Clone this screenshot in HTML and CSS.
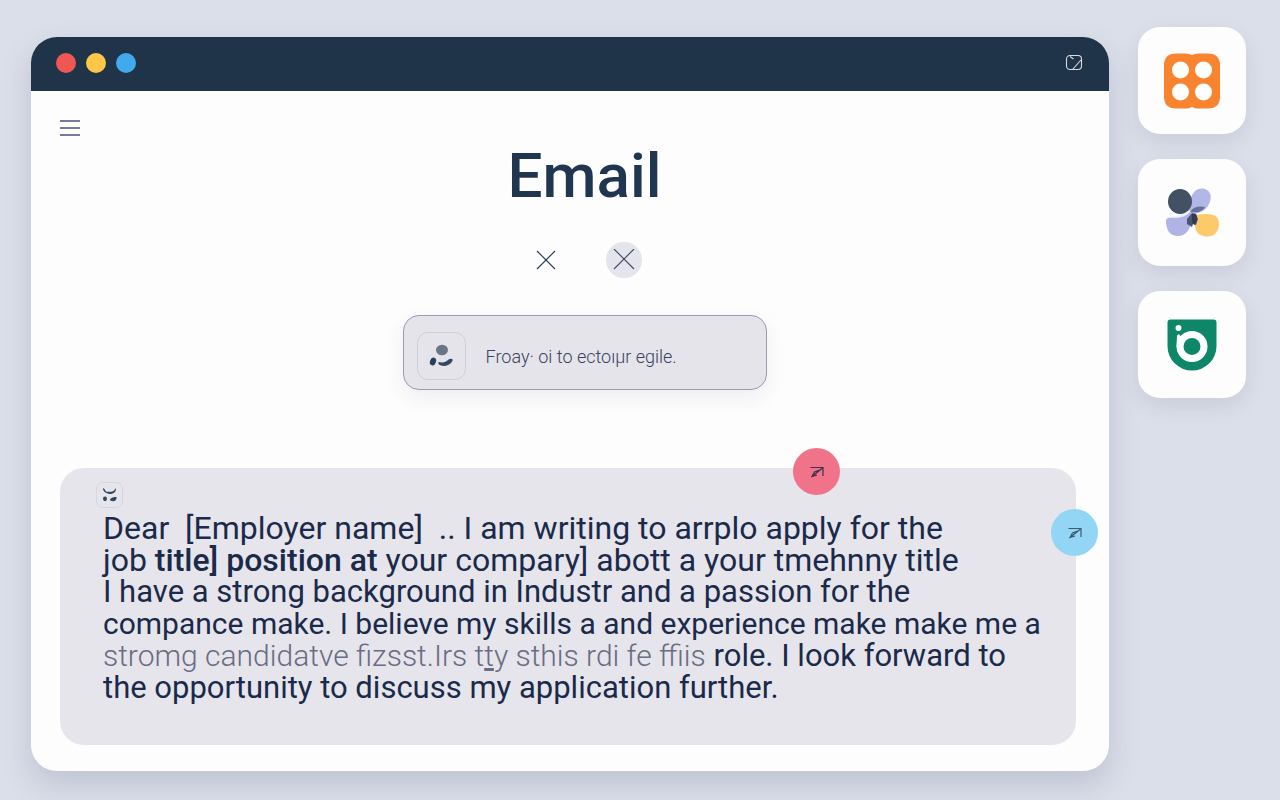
FILE: index.html
```html
<!DOCTYPE html>
<html lang="en">
<head>
    <meta charset="UTF-8">
    <meta name="viewport" content="width=device-width, initial-scale=1.0">
    <title>Email</title>
    <link rel="stylesheet" href="styles.css">
</head>
<body>

<div class="desktop">
    <div class="window">
        <header class="titlebar">
            <button class="dot red" aria-label="Close"></button>
            <button class="dot yellow" aria-label="Minimize"></button>
            <button class="dot blue" aria-label="Maximize"></button>
            <button class="icon-btn expand" aria-label="Open in new window">
                <svg width="18" height="18" viewBox="0 0 18 18" fill="none" stroke="#dcdbe3" stroke-width="1.1">
                    <rect x="1.5" y="1.5" width="15" height="14" rx="3.5"/>
                    <path d="M7.5 15.5L16 6M5 2.500l3.500 2.500"/>
                </svg>
            </button>
        </header>

        <main class="content">
            <div class="top">
                <button class="icon-btn menu" aria-label="Menu">
                    <svg width="20" height="18" viewBox="0 0 20 18" stroke="#46527a" stroke-width="1.6">
                        <path d="M0 2h20M0 9h20M0 16h20"/>
                    </svg>
                </button>
                <div class="intro">
                    <h1>Email</h1>
                    <div class="actions">
                        <button class="round" aria-label="Dismiss">
                            <svg width="20" height="20" viewBox="0 0 20 20" stroke="#2c3e5a" stroke-width="1.2"><path d="M1 1l18 18M19 1L1 19"/></svg>
                        </button>
                        <button class="round filled" aria-label="Clear">
                            <svg width="22" height="22" viewBox="0 0 22 22" stroke="#4a4f68" stroke-width="1.2"><path d="M1 0l20 20M21 0L1 20"/></svg>
                        </button>
                    </div>
                    <label class="field">
                        <span class="avatar">
                            <svg width="26" height="26" viewBox="0 0 26 26">
                                <ellipse cx="14" cy="7" rx="6" ry="5.2" fill="#6b7588"/>
                                <ellipse cx="5" cy="18.5" rx="3" ry="4" fill="#26405e" transform="rotate(20 5 18.5)"/>
                                <path d="M11 19c4 1 7 0 9.500-2.500 2.500-1.500 5-.5 4 1.500-3 5.500-10.500 6-13.500 3.500-1-1-1-2 0-2.500z" fill="#34495f"/>
                            </svg>
                        </span>
                        <input type="text" value="Froay· oi to ectoıµr egile." aria-label="Recipient">
                    </label>
                </div>
            </div>

            <section class="message">
                <span class="badge">
                    <svg width="16" height="14" viewBox="0 0 16 14" fill="#34465c">
                        <path d="M1 0c2 .5 2 3 3.500 3.800h5C12 3.500 12.500 2 13.500.500l.5 0c0 3-1.500 4.500-4 5.300-2 .5-4 .3-5.500-.8C2 4 1 2.500 1 0z"/>
                        <ellipse cx="3" cy="10.8" rx="2" ry="2.4"/>
                        <path d="M8 11.500c1-2 4-2.500 6.500-2.500.5 2.500-1 4.200-3.500 4.200-2 0-3-.5-3-1.700z"/>
                    </svg>
                </span>
                <p>
                    <span class="line large">Dear &nbsp;[Employer name] &nbsp;.. I am writing to arrplo apply for the</span>
                    <span class="line large">job <b>title] position at</b> your compary] abott a your tmehnny title</span>
                    <span class="line">I have a strong background in Industr and a passion for the</span>
                    <span class="line small">compance make. I believe my skills a and experience make make me a</span>
                    <span class="line"><span class="small faded">stromg candidatve fizsst.Irs t<u>t</u>y sthis rdi fe ffiis</span> role. I look forward to</span>
                    <span class="line">the opportunity to discuss my application further.</span>
                </p>
                <button class="fab pink" aria-label="Send">
                    <svg width="14" height="12" viewBox="0 0 14 12" fill="none" stroke="#3b3350" stroke-width="1.2"><path d="M.5 1.500H13V10M12.500 2L2 10.500M7 9L2 10.500 4.500 6l5-2"/></svg>
                </button>
                <button class="fab sky" aria-label="Forward">
                    <svg width="14" height="12" viewBox="0 0 14 12" fill="none" stroke="#3f5a70" stroke-width="1.2"><path d="M.5 1.500H13V10M12.500 2L2 10.500M7 9L2 10.500 4.500 6l5-2"/></svg>
                </button>
            </section>
        </main>
    </div>

    <nav class="apps">
        <a href="#" class="app" aria-label="Grid">
            <svg width="56" height="56" viewBox="0 0 56 56">
                <path d="M12 .5h10q3 0 6 1.500 3-1.500 6-1.500h10q12 0 12 12v31q0 12-12 12H34q-3 0-6-1.500-3 1.500-6 1.500H12q-12 0-12-12v-31Q0 .5 12 .5z" fill="#f98430"/>
                <g fill="#fff">
                    <circle cx="16.5" cy="17" r="8.5"/>
                    <circle cx="39.5" cy="17" r="8.5"/>
                    <circle cx="16.5" cy="39" r="8.5"/>
                    <circle cx="39.5" cy="39" r="8.5"/>
                </g>
            </svg>
        </a>
        <a href="#" class="app" aria-label="Petals">
            <svg width="54" height="50" viewBox="0 0 54 50">
                <path d="M26 10C28 3.500 32 .5 37 .5c6 0 10 5 8.500 11C44 19 39 23.500 33 25c-5 1-8 4-11 7l-5-6c5-4 8-9 9-16z" fill="#b3b7e8"/>
                <path d="M1 33c0-3 3-3.500 6-3.500 7 0 13-1 18-5.500l2 6c-1 11-6 18-14 18S1 42 1 33z" fill="#b0b4e4"/>
                <path d="M5 29c8-1 14-3 18-7l3 1c-5 6-12 8-21 6z" fill="#eff0fb"/>
                <path d="M25 24c3-5 9-6.500 15-5-2 4-6 6-15 5z" fill="#65719a"/>
                <ellipse cx="15" cy="13.5" rx="12" ry="12.5" fill="#435165"/>
                <path d="M31 27c7-1.500 13-1 17 0 4 1 6 4 6 9 0 8-5 12.500-12 12.500-8 0-12-5-12-11.500 0-4 .5-7 1-10z" fill="#fdca6b"/>
                <path d="M22 31l5-6 4 1 2 5-2 6-3-1-1 3-5-3z" fill="#4a5478"/>
                <path d="M27 26l4 0 1 5-2 6-3-2z" fill="#333a50"/>
            </svg>
        </a>
        <a href="#" class="app" aria-label="Shield">
            <svg width="50" height="52" viewBox="0 0 50 52">
                <path d="M3.500.5h43q3 0 3 3V27a24.500 24.500 0 0 1-49 0V3.500q0-3 3-3z" fill="#0d8767"/>
                <circle cx="11.5" cy="9" r="3" fill="#fff"/>
                <circle cx="25" cy="27.5" r="12" fill="none" stroke="#fff" stroke-width="7"/>
                <path d="M10 16.500l2-1.500 2 3-1 6-3.500 4z" fill="#fff"/>
            </svg>
        </a>
    </nav>
</div>

</body>
</html>
```
FILE: styles.css
```css
* {
    box-sizing: border-box;
}
body {
    margin: 0;
    min-height: 100vh;
    font-family: Roboto, Arial, sans-serif;
    color: #1b2a4a;
    background-color: #dbdfe9;
}
button {
    padding: 0;
    border: none;
    background: none;
    cursor: pointer;
}
svg {
    display: block;
}
.desktop {
    display: grid;
    grid-template-columns: 1fr 108px;
    gap: 29px;
    align-items: start;
    padding: 27px 34px 28px 31px;
}
.window {
    margin-top: 10px;
    border-radius: 26px;
    background-color: #fdfdfe;
    box-shadow: 0 14px 30px rgba(90, 95, 130, 0.22);
}
.titlebar {
    display: flex;
    align-items: center;
    gap: 10px;
    height: 54px;
    padding: 0 26px 2px 25px;
    border-radius: 26px 26px 0 0;
    background-color: #1f3449;
}
.dot {
    width: 20px;
    height: 20px;
    border-radius: 50%;
}
.red {
    background-color: #ef5753;
}
.yellow {
    background-color: #fec646;
}
.blue {
    background-color: #41a9ec;
}
.expand {
    margin-left: auto;
}
.content {
    padding: 28px 33px 26px 29px;
}
.top {
    display: grid;
    grid-template-columns: 33px 1fr;
    align-items: start;
}
.intro {
    display: flex;
    flex-direction: column;
    align-items: center;
    padding-top: 20px;
}
h1 {
    margin: 0;
    font-size: 62px;
    line-height: 74px;
    font-weight: 500;
    color: #1f3550;
}
.actions {
    display: flex;
    gap: 42px;
    margin-top: 29px;
}
.round {
    display: flex;
    align-items: center;
    justify-content: center;
    width: 36px;
    height: 36px;
    border-radius: 50%;
}
.filled {
    background-color: #e4e5ec;
}
.field {
    display: flex;
    align-items: center;
    gap: 20px;
    width: 364px;
    height: 75px;
    margin-top: 37px;
    padding: 6px 14px 0 13px;
    border: 1px solid #9a9caf;
    border-radius: 16px;
    background-color: #e4e4ea;
    box-shadow: 0 8px 20px rgba(60, 60, 90, 0.08);
}
.avatar {
    display: flex;
    align-items: center;
    justify-content: center;
    width: 49px;
    height: 48px;
    border: 1px solid #cfd0d9;
    border-radius: 11px;
}
.field input {
    flex: 1;
    min-width: 0;
    padding: 2px 0 0;
    border: none;
    outline: none;
    background: none;
    font-family: inherit;
    font-size: 18px;
    font-weight: 300;
    color: #3a4260;
}
.message {
    position: relative;
    margin-top: 78px;
    padding: 14px 30px 41px 36px;
    border-radius: 24px;
    background-color: #e5e5eb;
}
.badge {
    display: flex;
    align-items: center;
    justify-content: center;
    width: 27px;
    height: 26px;
    border: 1px solid #d6d7de;
    border-radius: 7px;
}
.message p {
    margin: 4px 0 0 7px;
    font-size: 31px;
    line-height: 32px;
}
.message b {
    font-weight: 500;
}
.line {
    display: block;
}
.large {
    font-size: 32px;
}
.small {
    font-size: 30px;
}
.faded {
    font-weight: 300;
    color: #6a6c82;
}
.fab {
    position: absolute;
    display: flex;
    align-items: center;
    justify-content: center;
    width: 47px;
    height: 47px;
    border-radius: 50%;
}
.pink {
    top: -20px;
    right: 236px;
    background-color: #f17389;
}
.sky {
    top: 41px;
    right: -22px;
    background-color: #92d5f4;
}
.apps {
    display: flex;
    flex-direction: column;
    gap: 25px;
}
.app {
    display: flex;
    align-items: center;
    justify-content: center;
    height: 107px;
    border-radius: 22px;
    background-color: #fdfdfe;
    box-shadow: 0 8px 20px rgba(90, 100, 130, 0.14);
}
```
